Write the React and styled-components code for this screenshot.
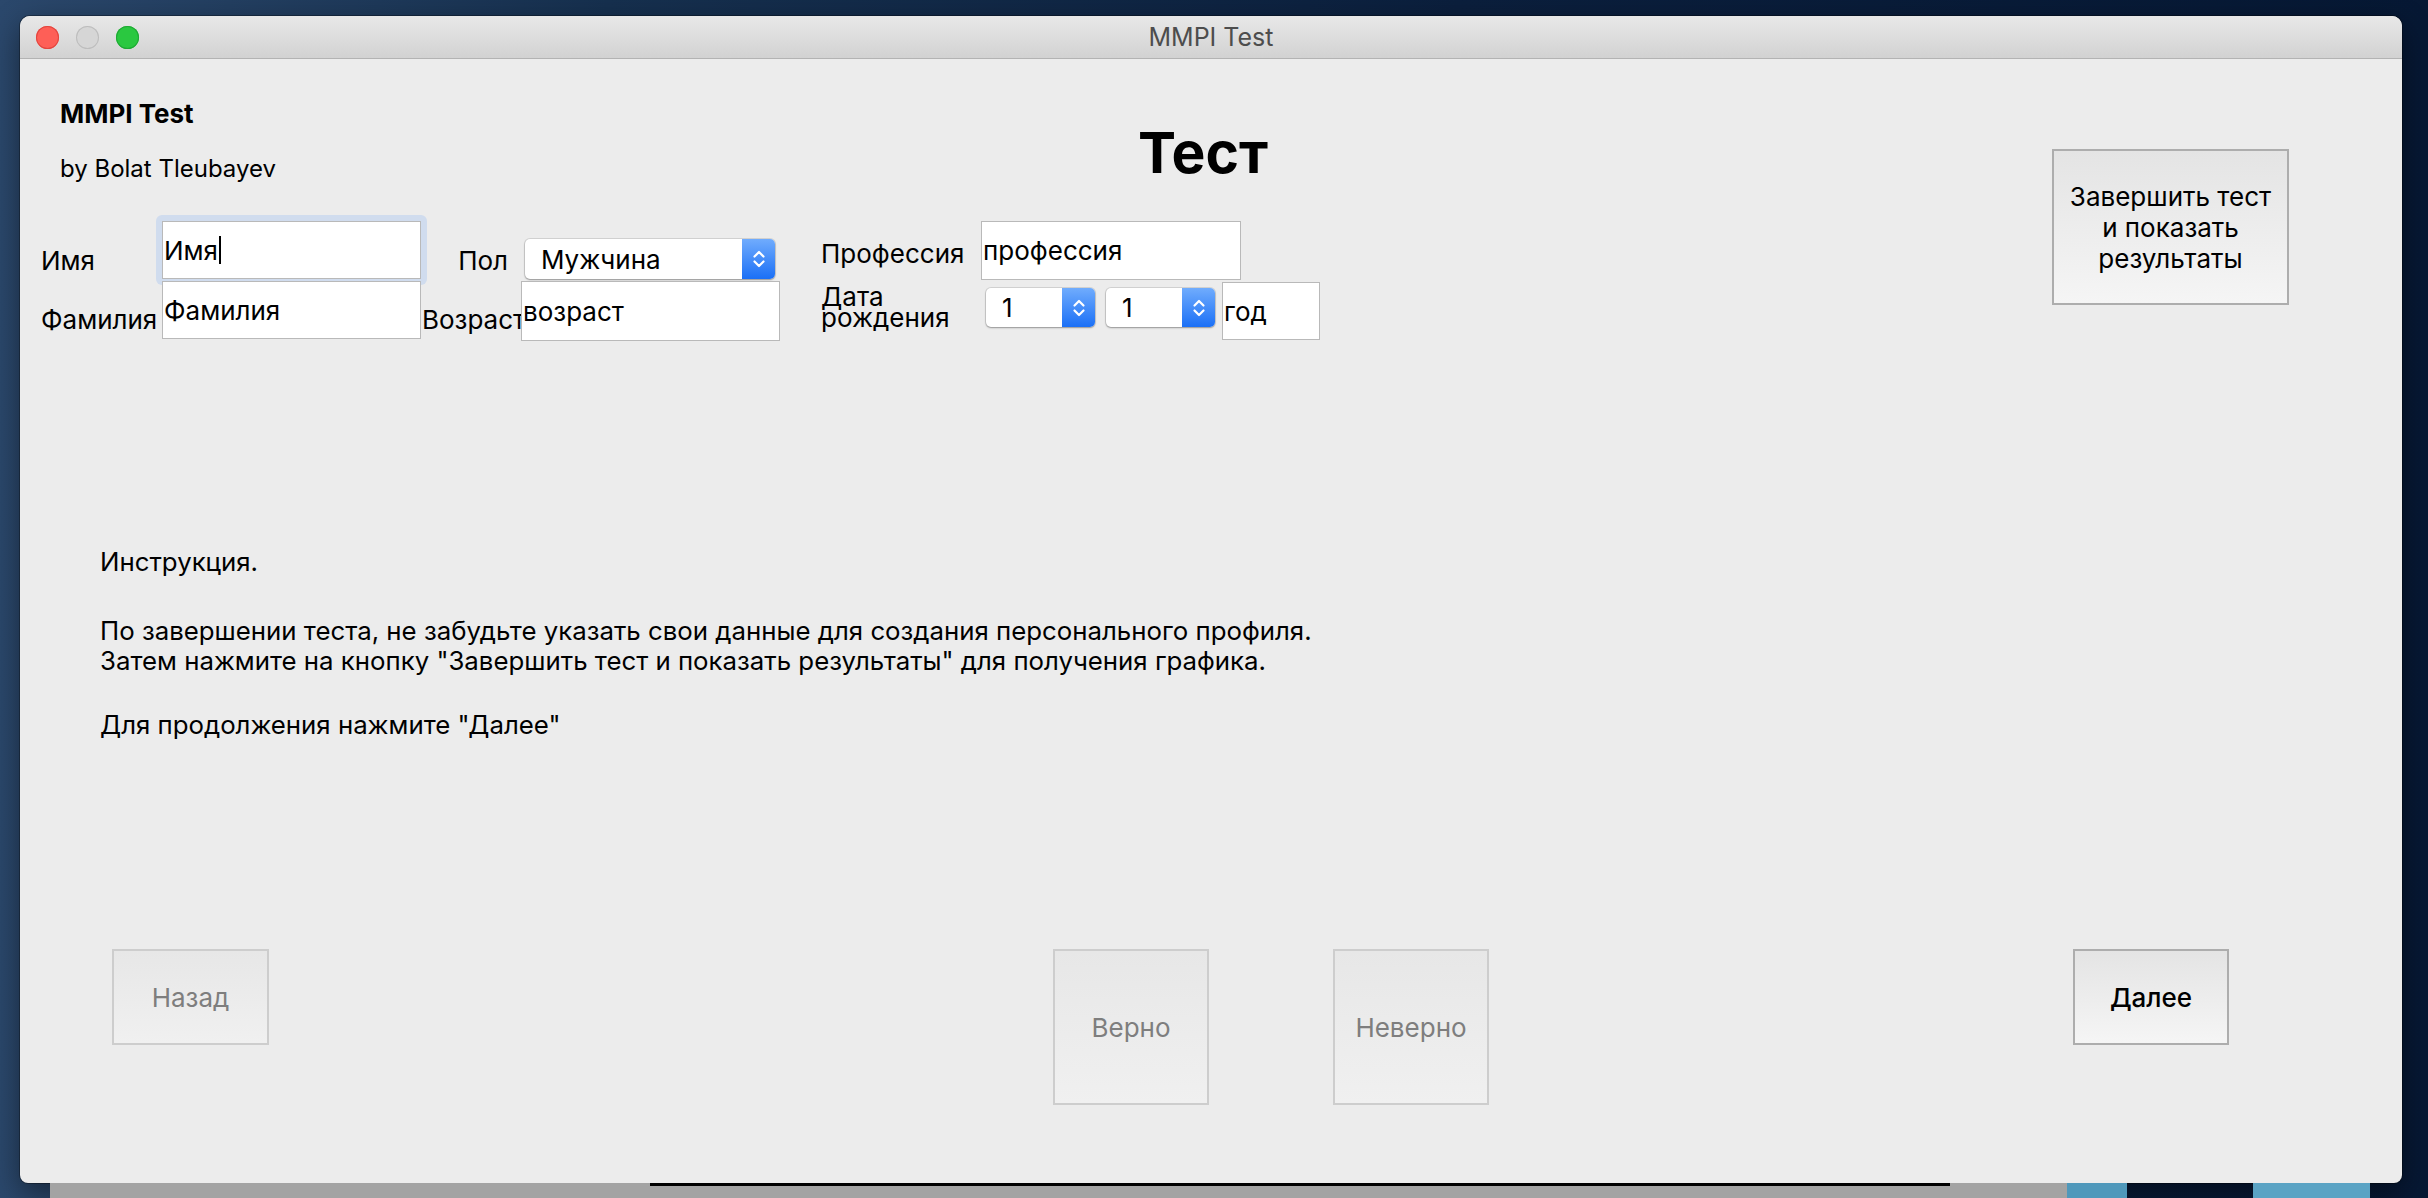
import React from "react";
import styled, { createGlobalStyle } from "styled-components";

const GlobalStyle = createGlobalStyle`
  html, body {
    margin: 0;
    padding: 0;
  }
  body {
    background: linear-gradient(90deg, #2b486c 0%, #16304f 25%, #0b1f3d 60%, #061834 100%);
    font-family: Inter, "Noto Sans", "Liberation Sans", sans-serif;
    color: #000;
    overflow: hidden;
  }
`;

const Desktop = styled.div`
  width: 2428px;
  height: 1198px;
  box-sizing: border-box;
  padding: 16px 26px 0 20px;
  display: flex;
  flex-direction: column;
`;

const Window = styled.div`
  height: 1167px;
  flex: none;
  display: flex;
  flex-direction: column;
  background: #ececec;
  border-radius: 10px 10px 8px 8px;
  overflow: hidden;
  box-shadow: 0 0 0 1px rgba(0, 0, 0, 0.3), 0 10px 30px rgba(0, 0, 0, 0.45);
`;

const TitleBar = styled.div`
  height: 42px;
  flex: none;
  display: grid;
  grid-template-columns: 1fr auto 1fr;
  align-items: center;
  background: linear-gradient(#e8e8e8, #d2d2d2);
  border-bottom: 1px solid #b3b3b3;
`;

const Lights = styled.div`
  display: flex;
  gap: 17px;
  padding-left: 16px;
`;

const Light = styled.span`
  width: 23px;
  height: 23px;
  border-radius: 50%;
  background: ${(p) => p.$color};
  box-shadow: inset 0 0 0 1px ${(p) => p.$edge};
`;

const WindowTitle = styled.div`
  font-size: 25px;
  color: #4d4d4d;
`;

const Content = styled.div`
  flex: 1;
  display: flex;
  flex-direction: column;
  padding: 0 37px 0 21px;
`;

const Top = styled.div`
  display: grid;
  grid-template-columns: 1fr auto 1fr;
  margin-top: 40px;
`;

const Brand = styled.div`
  grid-column: 1;
  grid-row: 1;
  padding-left: 19px;
`;

const BrandName = styled.div`
  font-size: 26px;
  font-weight: 700;
  line-height: 30px;
`;

const BrandAuthor = styled.div`
  font-size: 24px;
  line-height: 30px;
  margin-top: 25px;
`;

const PageTitle = styled.h1`
  grid-column: 2;
  grid-row: 1;
  margin: 25px 0 0;
  font-size: 57px;
  line-height: 57px;
  font-weight: 700;
`;

const PushButton = styled.button`
  box-sizing: border-box;
  flex: none;
  width: ${(p) => p.$w}px;
  height: ${(p) => p.$h}px;
  margin: 0 0 0 ${(p) => p.$ml || 0}px;
  padding: 0;
  border: 2px solid ${(p) => (p.disabled ? "#cdcdcd" : "#adadad")};
  border-radius: 0;
  background: ${(p) =>
    p.disabled
      ? "linear-gradient(#e7e7e7, #f0f0f0)"
      : "linear-gradient(#e4e4e4, #f5f5f5)"};
  color: ${(p) => (p.disabled ? "#7e7e7e" : "#000")};
  font-family: inherit;
  font-size: 26px;
  font-weight: ${(p) => (p.$strong ? 500 : 400)};
  line-height: 31px;
  text-align: center;
`;

const FinishButton = styled(PushButton)`
  grid-column: 3;
  grid-row: 1 / 3;
  justify-self: end;
  align-self: start;
  margin: 50px 76px 0 0;
`;

const Form = styled.div`
  grid-column: 1 / -1;
  grid-row: 2;
  justify-self: start;
  margin-top: 37px;
  display: grid;
  grid-template-columns: 121px 259px 100px 259px 201px auto;
  grid-template-rows: 60px 60px;
`;

const Label = styled.div`
  align-self: start;
  justify-self: ${(p) => p.$justify || "start"};
  margin: ${(p) => p.$mt}px ${(p) => p.$mr || 0}px 0 ${(p) => p.$ml || 0}px;
  font-size: 26px;
  line-height: 28px;
  white-space: nowrap;
`;

const StackLabel = styled(Label)`
  line-height: 21px;
`;

const FocusRing = styled.div`
  align-self: start;
  justify-self: start;
  margin: -6px 0 0 -6px;
  padding: 6px;
  border-radius: 6px;
  background: #d0dcee;
`;

const Field = styled.div`
  box-sizing: border-box;
  flex: none;
  align-self: start;
  width: ${(p) => p.$w}px;
  height: ${(p) => p.$h}px;
  margin: ${(p) => p.$mt || 0}px 0 0 ${(p) => p.$ml || 0}px;
  display: flex;
  align-items: center;
  padding-left: 1px;
  background: #fff;
  border: 1px solid #b9b9b9;
  font-size: 26px;
  white-space: nowrap;
`;

const Caret = styled.span`
  width: 2px;
  height: 28px;
  margin-left: 1px;
  background: #000;
`;

const Select = styled.div`
  box-sizing: border-box;
  flex: none;
  align-self: start;
  width: ${(p) => p.$w}px;
  height: ${(p) => p.$h}px;
  margin: ${(p) => p.$mt || 0}px 0 0 ${(p) => p.$ml || 0}px;
  display: flex;
  background: #fff;
  border-radius: 5px;
  box-shadow: 0 0 0 1px rgba(0, 0, 0, 0.1), 0 1px 2px rgba(0, 0, 0, 0.3);
  font-size: 26px;
`;

const SelectValue = styled.div`
  flex: 1;
  display: flex;
  align-items: center;
  padding-left: ${(p) => p.$pl}px;
`;

const SelectArrows = styled.div`
  width: 33px;
  flex: none;
  display: flex;
  align-items: center;
  justify-content: center;
  border-radius: 0 5px 5px 0;
  background: linear-gradient(#70acfd, #1b70f6);
`;

const DateGroup = styled.div`
  display: flex;
  align-items: flex-start;
  margin-left: 5px;
`;

const Instructions = styled.div`
  margin-top: 206px;
  padding-left: 59px;
  font-size: 25.8px;
  line-height: 30px;
`;

const Para = styled.p`
  margin: ${(p) => p.$mt || 0}px 0 0;
  white-space: nowrap;
`;

const BottomBar = styled.div`
  display: flex;
  align-items: flex-start;
  margin-top: 209px;
  padding-left: 71px;
`;

const Dock = styled.div`
  flex: 1;
  display: flex;
  padding-left: 30px;
`;

const DockPart = styled.div`
  width: ${(p) => p.$w}px;
  flex: none;
  box-sizing: border-box;
  background: ${(p) => p.$bg};
  border-top: ${(p) => (p.$line ? "3px solid #000" : "none")};
`;

const Arrows = () => (
  <svg width="14" height="24" viewBox="0 0 14 24">
    <path
      d="M2.5 9.5 L7 5 L11.5 9.5 M2.5 14.5 L7 19 L11.5 14.5"
      fill="none"
      stroke="#fff"
      strokeWidth="2.2"
      strokeLinecap="round"
      strokeLinejoin="round"
    />
  </svg>
);

const Dropdown = ({ value, w, h, mt, ml, pl }) => (
  <Select $w={w} $h={h} $mt={mt} $ml={ml}>
    <SelectValue $pl={pl}>{value}</SelectValue>
    <SelectArrows>
      <Arrows />
    </SelectArrows>
  </Select>
);

export default function App() {
  return (
    <>
      <GlobalStyle />
      <Desktop>
        <Window>
          <TitleBar>
            <Lights>
              <Light $color="#fe5f57" $edge="#e2463f" />
              <Light $color="#d6d6d6" $edge="#bdbdbd" />
              <Light $color="#2ac840" $edge="#1fa934" />
            </Lights>
            <WindowTitle>MMPI Test</WindowTitle>
          </TitleBar>
          <Content>
            <Top>
              <Brand>
                <BrandName>MMPI Test</BrandName>
                <BrandAuthor>by Bolat Tleubayev</BrandAuthor>
              </Brand>
              <PageTitle>Тест</PageTitle>
              <FinishButton $w={237} $h={156}>
                Завершить тест
                <br />
                и показать
                <br />
                результаты
              </FinishButton>
              <Form>
                <Label $mt={26}>Имя</Label>
                <FocusRing>
                  <Field $w={259} $h={58}>
                    Имя
                    <Caret />
                  </Field>
                </FocusRing>
                <Label $mt={26} $justify="end" $mr={13}>
                  Пол
                </Label>
                <Dropdown value="Мужчина" w={250} h={40} mt={18} ml={4} pl={16} />
                <Label $mt={19} $ml={41}>
                  Профессия
                </Label>
                <Field $w={260} $h={59}>
                  профессия
                </Field>

                <Label $mt={25}>Фамилия</Label>
                <Field $w={259} $h={58}>
                  Фамилия
                </Field>
                <Label $mt={25} $ml={1}>
                  Возраст
                </Label>
                <Field $w={259} $h={60}>
                  возраст
                </Field>
                <StackLabel $mt={5} $ml={41}>
                  Дата
                  <br />
                  рождения
                </StackLabel>
                <DateGroup>
                  <Dropdown value="1" w={109} h={39} mt={7} pl={16} />
                  <Dropdown value="1" w={109} h={39} mt={7} ml={11} pl={16} />
                  <Field $w={98} $h={58} $mt={1} $ml={7}>
                    год
                  </Field>
                </DateGroup>
              </Form>
            </Top>

            <Instructions>
              <Para>Инструкция.</Para>
              <Para $mt={39}>
                По завершении теста, не забудьте указать свои данные для создания персонального профиля.
                <br />
                Затем нажмите на кнопку "Завершить тест и показать результаты" для получения графика.
              </Para>
              <Para $mt={34}>Для продолжения нажмите "Далее"</Para>
            </Instructions>

            <BottomBar>
              <PushButton $w={157} $h={96} disabled>
                Назад
              </PushButton>
              <PushButton $w={156} $h={156} $ml={784} disabled>
                Верно
              </PushButton>
              <PushButton $w={156} $h={156} $ml={124} disabled>
                Неверно
              </PushButton>
              <PushButton $w={156} $h={96} $ml={584} $strong>
                Далее
              </PushButton>
            </BottomBar>
          </Content>
        </Window>
        <Dock>
          <DockPart $w={600} $bg="#a3a3a3" />
          <DockPart $w={1300} $bg="#a3a3a3" $line />
          <DockPart $w={117} $bg="#a3a3a3" />
          <DockPart $w={60} $bg="#4f98bb" />
          <DockPart $w={126} $bg="transparent" />
          <DockPart $w={117} $bg="#5aa3c4" />
        </Dock>
      </Desktop>
    </>
  );
}
